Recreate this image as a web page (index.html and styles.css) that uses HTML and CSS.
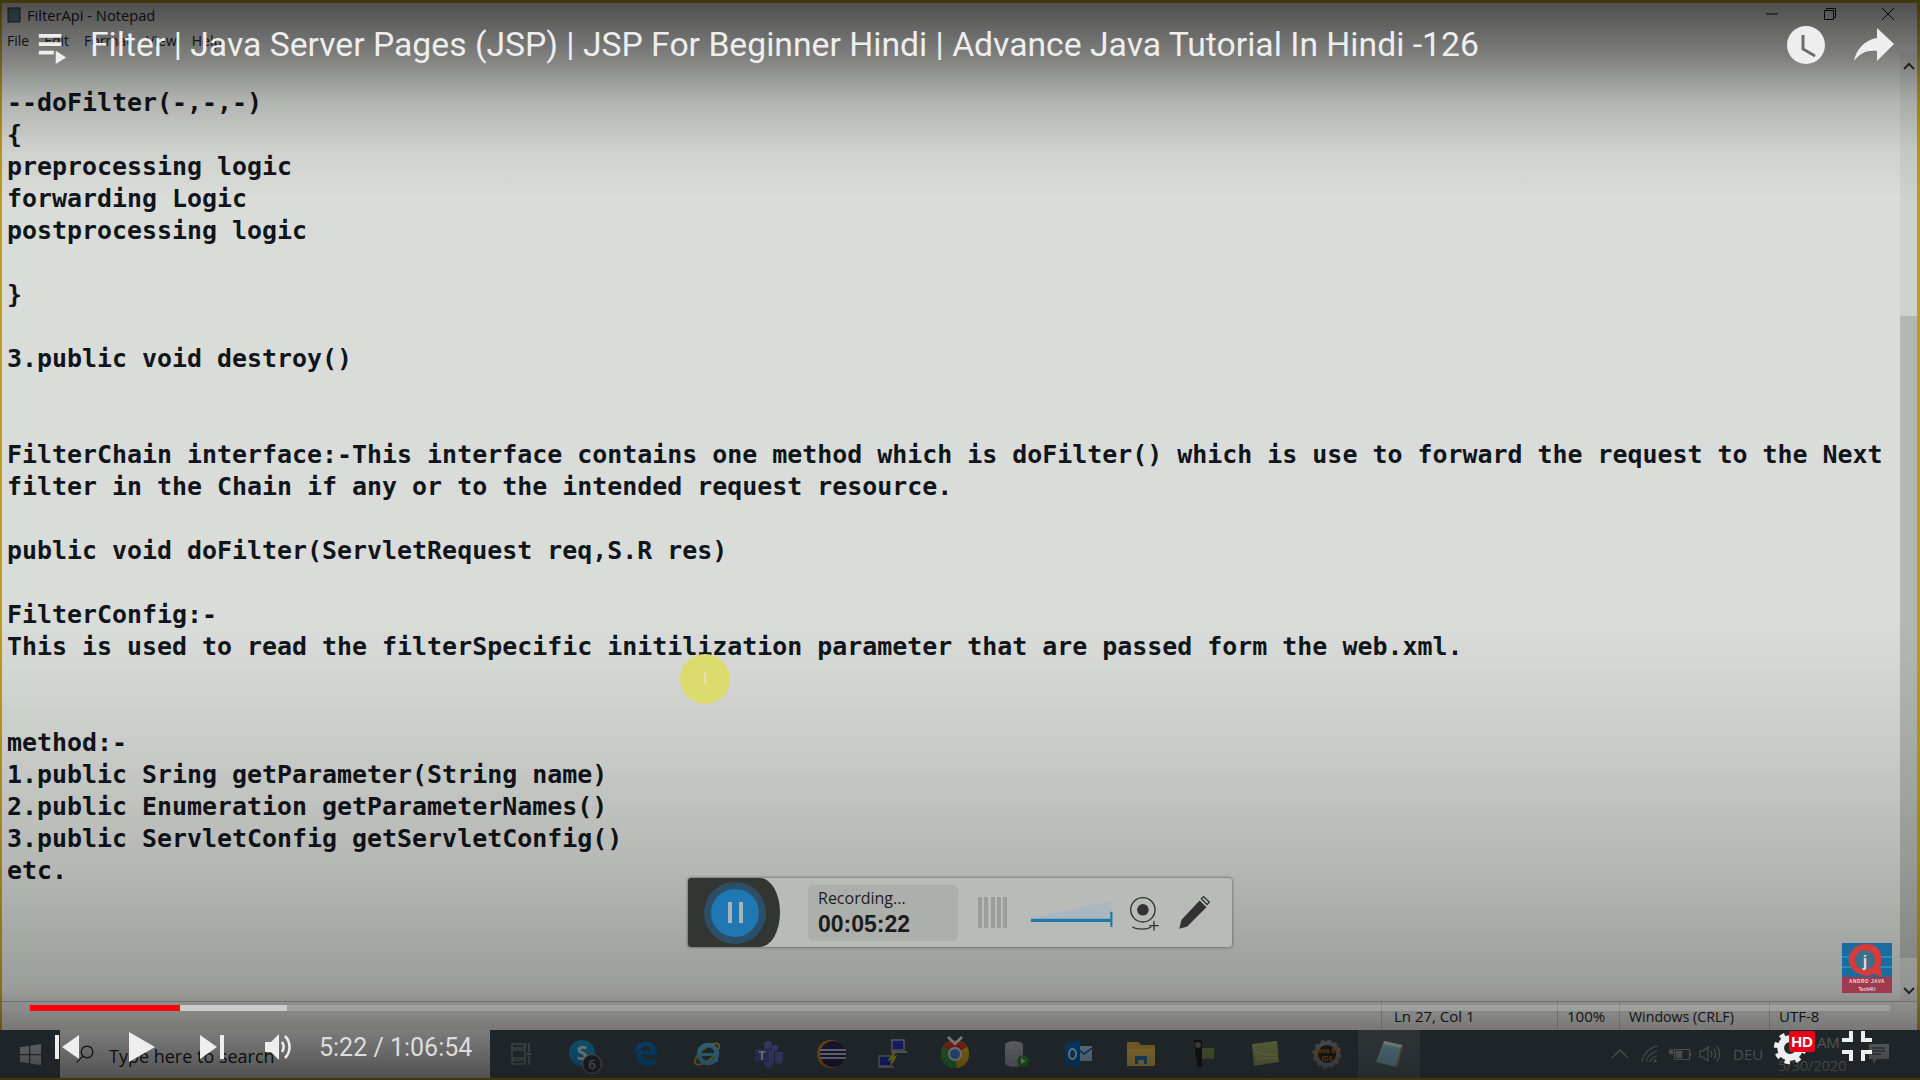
FILE: index.html
```html
<!DOCTYPE html>
<html lang="en">
<head>
  <meta charset="UTF-8" />
  <title>FilterApi - Notepad</title>
  <link rel="stylesheet" href="styles.css">
</head>
<body>

<div class="screen">

  <!-- notepad window -->
  <div class="window">
    <div class="titlebar">
      <svg class="app-icon" viewBox="0 0 14 16" width="14" height="16"><rect x="1" y="1" width="12" height="14" fill="#5f7f8c" stroke="#333"/></svg>
      <span class="app-name">FilterApi - Notepad</span>
      <span class="win-btns">
        <svg viewBox="0 0 14 14" width="14" height="14"><path d="M1 7h12" stroke="#111" stroke-width="1"/></svg>
        <svg viewBox="0 0 14 14" width="14" height="14"><path d="M1.500 3.500h9v9h-9z M3.500 3.500v-2h9v9h-2" fill="none" stroke="#111" stroke-width="1"/></svg>
        <svg viewBox="0 0 14 14" width="14" height="14"><path d="M1 1l12 12M13 1L1 13" stroke="#111" stroke-width="1"/></svg>
      </span>
    </div>
    <div class="menubar">
      <span>File</span><span>Edit</span><span>Format</span><span>View</span><span>Help</span>
    </div>
    <div class="editor">
<pre class="doc">--doFilter(-,-,-)
{
preprocessing logic
forwarding Logic
postprocessing logic

}

3.public void destroy()


FilterChain interface:-This interface contains one method which is doFilter() which is use to forward the request to the Next
filter in the Chain if any or to the intended request resource.

public void doFilter(ServletRequest req,S.R res)

FilterConfig:-
This is used to read the filterSpecific initilization parameter that are passed form the web.xml.


method:-
1.public Sring getParameter(String name)
2.public Enumeration getParameterNames()
3.public ServletConfig getServletConfig()
etc.</pre>
      <div class="scrollbar">
        <svg viewBox="0 0 12 8" width="12" height="8"><path d="M1 7l5-5 5 5" fill="none" stroke="#333" stroke-width="2"/></svg>
        <div class="thumb"></div>
        <svg viewBox="0 0 12 8" width="12" height="8"><path d="M1 1l5 5 5-5" fill="none" stroke="#333" stroke-width="2"/></svg>
      </div>
    </div>
    <div class="statusbar">
      <span class="cell cell-pos">Ln 27, Col 1</span>
      <span class="cell cell-zoom">100%</span>
      <span class="cell cell-eol">Windows (CRLF)</span>
      <span class="cell cell-enc">UTF-8</span>
    </div>
  </div>

  <!-- windows taskbar -->
  <div class="taskbar">
    <div class="start">
      <svg viewBox="0 0 20 20" width="21" height="21"><path d="M0 3l8.500-1.200v7.700H0zM9.800 1.600L20 0v9.500H9.800zM0 10.700h8.500v7.600L0 17.100zM9.800 10.700H20V20L9.800 18.500z" fill="#b9bfc2"/></svg>
    </div>
    <div class="search">
      <svg viewBox="0 0 24 24" width="20" height="20"><circle cx="14.500" cy="9.500" r="7" fill="none" stroke="#222" stroke-width="1.500"/><path d="M9.500 14.500L2 22" stroke="#222" stroke-width="1.500"/></svg>
      <span>Type here to search</span>
    </div>
    <div class="apps">
      <span class="app"><svg viewBox="0 0 24 24" width="24" height="24"><path d="M3 2h13v4H3zM3 8h13v8H3zM3 18h13v4H3zM20 1v9M20 14v9" fill="none" stroke="#9aa2a5" stroke-width="1.200"/><path d="M18 11h4v2h-4z" fill="#9aa2a5"/></svg></span>
      <span class="app app-badged"><svg viewBox="0 0 30 30" width="30" height="30"><circle cx="14" cy="14" r="13" fill="#1d9ad6"/><text x="14" y="21" class="glyph" font-size="20">S</text></svg><span class="badge">6</span></span>
      <span class="app"><svg viewBox="0 0 28 28" width="28" height="28"><path d="M2 15C3 6 9 2 15 2c7 0 11 5 11 13H10c0 5 9 7 15 3v6c-9 4-18 1-19-6-1-4 1-7 3-8-3 1-5 3-7 5zM10 11h10c0-3-2-5-5-5s-5 2-5 5z" fill="#0a7ad0"/></svg></span>
      <span class="app"><svg viewBox="0 0 30 30" width="30" height="30"><ellipse cx="15" cy="15" rx="15" ry="6" transform="rotate(-40 15 15)" fill="none" stroke="#e5b81f" stroke-width="1.800"/><circle cx="16" cy="15" r="9" fill="none" stroke="#5fc3e8" stroke-width="4.500"/><path d="M9 14h15v3H9z" fill="#5fc3e8"/><path d="M18 20h8v3h-8z" fill="#5fc3e8"/></svg></span>
      <span class="app"><svg viewBox="0 0 30 30" width="30" height="30"><circle cx="21" cy="9" r="3" fill="#6a70c4"/><circle cx="14" cy="6" r="4" fill="#6a70c4"/><path d="M10 11h10v11c0 5-3 7-5 7s-5-2-5-7z" fill="#6a70c4"/><path d="M21 13h8v8c0 3-2 4-4 4s-4-1-4-4z" fill="#6a70c4"/><rect x="1" y="10" width="14" height="13" fill="#555ca8"/><text x="8" y="21" class="glyph" font-size="12">T</text></svg></span>
      <span class="app"><svg viewBox="0 0 30 30" width="30" height="30"><circle cx="15" cy="15" r="14" fill="#d98a1d"/><circle cx="17" cy="15" r="13" fill="#2c2a5c"/><path d="M4 11h26M4 15h26M4 19h26" stroke="#cfd0e0" stroke-width="2"/></svg></span>
      <span class="app"><svg viewBox="0 0 30 30" width="30" height="30"><path d="M14 1h12v10H14zM1 17h12v10H1z" fill="#2438c4" stroke="#aaa" stroke-width="1.500"/><path d="M18 12L12 20l5-2-3 6" fill="none" stroke="#e5d21c" stroke-width="2"/><path d="M13 12h16v2H13zM0 27h16v2H0z" fill="#aaa"/></svg></span>
      <span class="app app-chrome"><svg viewBox="0 0 28 28" width="28" height="28"><circle cx="14" cy="14" r="14" fill="#e5b81f"/><path d="M14 14L2 7A14 14 0 0 1 26 7z" fill="#d9382c"/><path d="M14 14L26 7a14 14 0 0 1-10 21z" fill="#e5b81f"/><path d="M14 14L16 28A14 14 0 0 1 2 7z" fill="#3da14a"/><circle cx="14" cy="14" r="6" fill="#4a8be8" stroke="#e8e8e8" stroke-width="2"/></svg><svg class="chrome-check" viewBox="0 0 16 10" width="16" height="10"><path d="M1 1l7 7 7-7" fill="none" stroke="#eee" stroke-width="2.500"/></svg></span>
      <span class="app"><svg viewBox="0 0 26 28" width="26" height="28"><path d="M1 5c0-5 18-5 18 0v18c0 5-18 5-18 0z" fill="#aeb6bd"/><circle cx="19" cy="21" r="6" fill="#3c9c3c"/><path d="M17 18l5 3-5 3z" fill="#d8e8d8"/></svg></span>
      <span class="app"><svg viewBox="0 0 28 28" width="28" height="28"><rect x="12" y="6" width="15" height="15" fill="#a9d3f2"/><path d="M12 8l7 6 8-6" fill="none" stroke="#0a5ca8" stroke-width="1.500"/><path d="M0 4l15-4v28L0 24z" fill="#0a6cc0"/><ellipse cx="7.500" cy="14" rx="3.500" ry="5" fill="none" stroke="#e8f2fa" stroke-width="2"/></svg></span>
      <span class="app"><svg viewBox="0 0 30 26" width="30" height="26"><path d="M1 1h11l3 3h14v21H1z" fill="#e2b33e"/><path d="M1 8h28v17H1z" fill="#f3cd63"/><path d="M9 23v-8h12v8h-3v-4h-6v4z" fill="#2a7fc4"/></svg></span>
      <span class="app"><svg viewBox="0 0 26 30" width="26" height="30"><path d="M4 1h8v27H8C6 20 5 10 4 1z" fill="#222"/><circle cx="8" cy="6" r="3" fill="#777"/><rect x="12" y="9" width="12" height="11" fill="#84925a"/></svg></span>
      <span class="app"><svg viewBox="0 0 28 28" width="28" height="28"><path d="M1 4L26 1l2 21-25 4z" fill="#a7b268"/><path d="M4 12c8 1 14 4 22 3M6 20c6-3 12-2 20-1" stroke="#cdd5a0" fill="none"/></svg></span>
      <span class="app"><svg viewBox="0 0 30 30" width="30" height="30"><circle cx="15" cy="15" r="11" fill="#2a2a2a" stroke="#8a8d8f" stroke-width="4"/><circle cx="15" cy="15" r="13" fill="none" stroke="#8a8d8f" stroke-width="3" stroke-dasharray="3.500 3.300"/><text x="15" y="14" class="glyph glyph-orange" font-size="7">Java EE</text><text x="15" y="22" class="glyph glyph-orange" font-size="7">IDE</text></svg></span>
      <span class="app app-active"><svg viewBox="0 0 28 28" width="28" height="28"><path d="M9 1l18 4-6 22-20-5z" fill="#8fc7da"/><path d="M9 1l18 4-.8 3-18-4z" fill="#dfe8ec"/><path d="M21 27l6-22 1 1-5 21z" fill="#a58a5c"/></svg></span>
    </div>
    <div class="tray">
      <svg class="tray-chevron" viewBox="0 0 18 10" width="18" height="10"><path d="M1 9l8-8 8 8" fill="none" stroke="#a4aaad" stroke-width="1.300"/></svg>
      <svg class="tray-wifi" viewBox="0 0 20 20" width="20" height="20"><path d="M2 18C3 10 10 3 18 2M6 18c1-5 5-9 11-11M10 18c1-3 3-5 7-6" fill="none" stroke="#a4aaad" stroke-width="1.200"/><circle cx="15" cy="17" r="1.500" fill="#a4aaad"/></svg>
      <svg class="tray-batt" viewBox="0 0 22 14" width="22" height="14"><path d="M5.500 2.500h15v10h-15z" fill="none" stroke="#a4aaad" stroke-width="1.200"/><path d="M7 4h6v7H7zM21 6h1v3h-1zM0 3h4v4H0zM1 0v3M3 0v3" fill="#a4aaad" stroke="#a4aaad" stroke-width=".4"/></svg>
      <svg class="tray-vol" viewBox="0 0 22 18" width="22" height="18"><path d="M1 6h3l5-4v14l-5-4H1z" fill="none" stroke="#a4aaad" stroke-width="1.200"/><path d="M12 6c1 2 1 4 0 6M15 4c2 3 2 7 0 10M18 1c3 5 3 11 0 16" fill="none" stroke="#a4aaad" stroke-width="1.200"/></svg>
      <span class="lang">DEU</span>
      <span class="clock"><span class="clock-time">AM</span><span class="clock-date">5/30/2020</span></span>
      <svg class="notify" viewBox="0 0 20 20" width="20" height="20"><path d="M0 0h20v15H8l-4 5v-5H0z" fill="#a4aaad"/><path d="M3 4h13M3 7h13M3 10h9" stroke="#33393c" stroke-width="1.200"/></svg>
    </div>
  </div>

  <!-- video shading, sits over the recording -->
  <div class="shade shade-top"></div>
  <div class="shade shade-bottom"></div>

  <!-- mouse highlight from the screen recorder -->
  <div class="cursor-spot"><span class="ibeam">I</span></div>

  <!-- screen recorder widget -->
  <div class="recorder">
    <div class="rec-left">
      <div class="rec-ring"><div class="rec-btn"><i></i><i></i></div></div>
    </div>
    <div class="rec-time">
      <span class="rec-label">Recording...</span>
      <span class="rec-clock">00:05:22</span>
    </div>
    <div class="rec-bars"><i></i><i></i><i></i><i></i><i></i></div>
    <svg class="rec-level" viewBox="0 0 76 24" width="82" height="26"><path d="M0 16L74 0v16z" fill="#a9b8c0"/><path d="M0 18h74" stroke="#1f78a8" stroke-width="3"/><path d="M74.500 10v14" stroke="#1f78a8" stroke-width="2"/></svg>
    <svg class="rec-cam" viewBox="0 0 30 34" width="32" height="36"><circle cx="13" cy="13" r="11.500" fill="none" stroke="#333" stroke-width="1.300"/><circle cx="13" cy="13" r="5.500" fill="#333"/><path d="M3 29c4 3 14 3 18 0" fill="none" stroke="#333" stroke-width="1.300"/><path d="M19 28h9M23.500 23.500v9" stroke="#333" stroke-width="1.300"/></svg>
    <svg class="rec-pen" viewBox="0 0 28 30" width="32" height="34"><path d="M1 29l2-8L19 4l6 6L8 27z" fill="#333"/><path d="M20.500 2.500l2-2 5 5-2 2z" fill="none" stroke="#333" stroke-width="1.200"/></svg>
  </div>

  <!-- channel watermark -->
  <svg class="watermark" viewBox="0 0 50 50" width="50" height="50">
    <rect width="50" height="50" fill="#1b6c9e"/>
    <path d="M0 14h50M0 24h50" stroke="#35b6d8" stroke-width="1.500" opacity=".6"/>
    <path d="M25 1c11 0 16 9 14 18-1 5-1 10 2 15l-9-3c-3 2-8 2-12 1C10 29 4 20 8 11 11 4 18 1 25 1z" fill="#d93a3a"/>
    <circle cx="23" cy="17" r="10" fill="#3c6f88"/>
    <text x="23" y="24" class="wm-text" font-size="16">j</text>
    <rect y="34" width="50" height="16" fill="#b53040" opacity=".85"/>
    <text x="25" y="40" class="wm-text wm-wide" font-size="4.800">ANDRO JAVA</text>
    <text x="25" y="47.500" class="wm-text" font-size="4.800">Tech4U</text>
  </svg>

  <!-- youtube player chrome -->
  <div class="yt-top">
    <svg class="yt-playlist" viewBox="0 0 30 34" width="34" height="32"><path d="M1 2h24v4H1zM1 11h24v4H1zM1 20h16v4H1z" fill="#eee"/><path d="M19 20l11 7-11 7z" fill="#eee"/></svg>
    <span class="yt-title">Filter | Java Server Pages (JSP) | JSP For Beginner Hindi | Advance Java Tutorial In Hindi -126</span>
    <svg class="yt-clock" viewBox="0 0 38 38" width="38" height="38"><circle cx="19" cy="19" r="19" fill="#eee"/><path d="M16 9v14l12 7" fill="none" stroke="#6a6c6a" stroke-width="3"/></svg>
    <svg class="yt-share" viewBox="0 0 40 34" width="40" height="34"><path d="M23 0l17 16-17 17V23C13 22 6 25 0 33c2-11 10-21 23-23z" fill="#eee"/></svg>
  </div>

  <div class="yt-bottom">
    <div class="progress"><div class="loaded"></div><div class="played"></div></div>
    <div class="yt-controls">
      <svg class="yt-prev" viewBox="0 0 24 24" width="24" height="24"><path d="M0 0h4v24H0zM24 0v24L7 12z" fill="#eee"/></svg>
      <svg class="yt-play" viewBox="0 0 26 30" width="26" height="30"><path d="M0 0l26 15L0 30z" fill="#eee"/></svg>
      <svg class="yt-next" viewBox="0 0 24 24" width="24" height="24"><path d="M24 0h-4v24h4zM0 0v24l17-12z" fill="#eee"/></svg>
      <svg class="yt-vol" viewBox="0 0 28 28" width="28" height="28"><path d="M0 9h6l8-8v26l-8-8H0z" fill="#eee"/><path d="M17 9c2 3 2 7 0 10" fill="none" stroke="#eee" stroke-width="2.500"/><path d="M20 3c6 6 6 16 0 22" fill="none" stroke="#eee" stroke-width="2.500"/></svg>
      <span class="yt-time">5:22 / 1:06:54</span>
    </div>
  </div>

  <div class="yt-corner">
    <svg class="yt-gear" viewBox="0 0 40 40" width="34" height="34"><circle cx="20" cy="20" r="11" fill="none" stroke="#eee" stroke-width="8"/><circle cx="20" cy="20" r="16" fill="none" stroke="#eee" stroke-width="6" stroke-dasharray="6 6.560"/></svg>
    <span class="hd">HD</span>
    <svg class="yt-exitfs" viewBox="0 0 30 30" width="30" height="30"><path d="M11 0v11H0v-4h7V0zM19 0v11h11v-4h-7V0zM11 30V19H0v4h7v7zM19 30V19h11v4h-7v7z" fill="#eee"/></svg>
  </div>

</div>

</body>
</html>
```

FILE: styles.css
```css
* {
  box-sizing: border-box;
}

html, body {
  margin: 0;
  padding: 0;
}

body {
  background: #000;
  font-family: "Open Sans", "Noto Sans", sans-serif;
  overflow: hidden;
}

.screen {
  position: relative;
  width: 1920px;
  height: 1080px;
  display: flex;
  flex-direction: column;
  background: #b5a021;
  padding: 3px 3px 2px 2px;
  overflow: hidden;
}

/* notepad */
.window {
  flex: 1;
  display: flex;
  flex-direction: column;
  background: #dadcd9;
  min-height: 0;
}

.titlebar {
  height: 24px;
  display: flex;
  align-items: center;
  padding-left: 5px;
  font-size: 14px;
  color: #222;
}

.app-name {
  margin-left: 6px;
  font-size: 14.700px;
}

.win-btns {
  margin-left: auto;
  display: flex;
  gap: 44px;
  padding-right: 21px;
  margin-right: 1px;
  margin-top: -2px;
}

.menubar {
  height: 26px;
  display: flex;
  align-items: center;
  padding-left: 5px;
  font-size: 14px;
  color: #222;
  gap: 15px;
}

.editor {
  flex: 1;
  display: flex;
  min-height: 0;
}

.doc {
  flex: 1;
  margin: 0;
  padding: 34px 0 0 5px;
  font-family: "DejaVu Sans Mono", "Liberation Mono", monospace;
  font-weight: bold;
  font-size: 24.930px;
  line-height: 32px;
  letter-spacing: 0;
  color: #10151a;
  overflow: hidden;
}

.scrollbar {
  width: 17px;
  display: flex;
  flex-direction: column;
  align-items: center;
  background: #cfd1ce;
  padding: 9px 0 6px;
}

.thumb {
  width: 17px;
  height: 642px;
  margin-top: 246px;
  margin-bottom: auto;
  background: #b5b7b4;
}

.statusbar {
  height: 29px;
  display: flex;
  align-items: center;
  border-top: 1px solid #a8aaa7;
  font-size: 15px;
  color: #222;
  padding-left: 1379px;
}

.cell {
  height: 100%;
  display: flex;
  align-items: center;
  border-left: 1px solid #b4b6b3;
  padding-left: 9px;
}

.cell-pos {
  width: 176px;
  padding-left: 12px;
}

.cell-zoom {
  width: 62px;
}

.cell-eol {
  width: 150px;
  font-size: 14.200px;
}

/* taskbar */
.taskbar {
  height: 48px;
  display: flex;
  align-items: stretch;
  background: linear-gradient(to bottom, #374349, #50606a);
  margin: 0 -3px 0 -2px;
}

.start {
  flex: none;
  width: 60px;
  display: flex;
  align-items: center;
  justify-content: center;
}

.search {
  flex: none;
  width: 430px;
  display: flex;
  align-items: center;
  background: #e2e3e2;
  color: #222;
  font-size: 18px;
  padding-left: 15px;
  gap: 14px;
}

.search svg {
  flex: none;
}

.search span {
  margin-top: 3px;
}

.apps {
  flex: none;
  display: flex;
  align-items: stretch;
}

.app {
  position: relative;
  flex: none;
  width: 62px;
  display: flex;
  align-items: center;
  justify-content: center;
}

.app-active {
  background: rgba(255, 255, 255, 0.14);
}

.chrome-check {
  position: absolute;
  left: 23px;
  top: 6px;
}

.badge {
  position: absolute;
  left: 30px;
  top: 24px;
  width: 20px;
  height: 20px;
  border-radius: 50%;
  border: 1px solid #aab0b3;
  background: #374349;
  color: #c5c9cb;
  font-size: 13px;
  line-height: 18px;
  text-align: center;
}

.glyph {
  font-family: "Open Sans", sans-serif;
  font-weight: bold;
  text-anchor: middle;
  fill: #e8eef2;
}

.glyph-orange {
  fill: #c9731e;
}

.tray {
  flex: 1;
  display: flex;
  align-items: center;
  color: #a4aaad;
  padding-left: 191px;
}

.tray svg {
  flex: none;
}

.tray-chevron {
  margin-right: 11px;
}

.tray-wifi {
  margin-right: 9px;
}

.tray-batt {
  margin-right: 8px;
}

.tray-vol {
  margin-right: 12px;
}

.lang {
  font-size: 15px;
  width: 45px;
}

.clock {
  width: 68px;
  margin-right: 23px;
  display: flex;
  flex-direction: column;
  font-size: 15px;
  line-height: 23px;
  letter-spacing: -.3px;
  white-space: nowrap;
}

.clock-time {
  padding-left: 39px;
}

/* video shading */
.shade {
  position: absolute;
  left: 0;
  width: 1920px;
  pointer-events: none;
}

.shade-top {
  top: 0;
  height: 200px;
  background: linear-gradient(to bottom, rgba(0,0,0,0.65) 0, rgba(0,0,0,0.43) 27%, rgba(0,0,0,0.19) 50%, rgba(0,0,0,0.05) 75%, rgba(0,0,0,0) 100%);
}

.shade-bottom {
  top: 620px;
  height: 460px;
  background: linear-gradient(to bottom, rgba(0,0,0,0) 0, rgba(0,0,0,0.07) 26%, rgba(0,0,0,0.17) 54%, rgba(0,0,0,0.29) 80%, rgba(0,0,0,0.45) 89%, rgba(0,0,0,0.65) 100%);
}

/* cursor */
.cursor-spot {
  position: absolute;
  left: 680px;
  top: 654px;
  width: 50px;
  height: 50px;
  border-radius: 50%;
  background: #dcdc6e;
  display: flex;
  align-items: center;
  justify-content: center;
}

.ibeam {
  font-family: "Liberation Serif", serif;
  font-size: 16px;
  color: #e6e6b8;
}

/* recorder */
.recorder {
  position: absolute;
  left: 688px;
  top: 878px;
  width: 544px;
  height: 69px;
  display: flex;
  align-items: center;
  background: #b9bbb8;
  border-radius: 3px;
  box-shadow: 0 0 3px rgba(0,0,0,0.6);
  overflow: hidden;
}

.rec-left {
  flex: none;
  width: 92px;
  height: 100%;
  display: flex;
  align-items: center;
  padding-left: 16px;
  background: #333533;
  border-radius: 0 20px 20px 0 / 0 50% 50% 0;
}

.rec-ring {
  width: 62px;
  height: 62px;
  border-radius: 50%;
  background: #2c4f67;
  display: flex;
  align-items: center;
  justify-content: center;
}

.rec-btn {
  width: 48px;
  height: 48px;
  border-radius: 50%;
  background: #1f78b4;
  display: flex;
  align-items: center;
  justify-content: center;
  gap: 7px;
}

.rec-btn i {
  width: 4px;
  height: 21px;
  background: #aab4b8;
}

.rec-time {
  flex: none;
  margin-left: 28px;
  width: 150px;
  height: 56px;
  display: flex;
  flex-direction: column;
  justify-content: center;
  padding-left: 10px;
  background: #adafac;
  border-radius: 5px;
  color: #1c1c1c;
}

.rec-label {
  font-size: 16px;
  line-height: 23px;
  font-family: "Open Sans", sans-serif;
}

.rec-clock {
  font-family: "Liberation Sans", sans-serif;
  font-weight: bold;
  font-size: 23px;
  line-height: 28px;
}

.rec-bars {
  flex: none;
  margin-left: 20px;
  display: flex;
  gap: 2.250px;
  height: 31px;
}

.rec-bars i {
  width: 4px;
  background: #9b9d9b;
}

.rec-level {
  flex: none;
  margin-left: 24px;
  margin-top: 2px;
}

.rec-cam {
  flex: none;
  margin-left: 16px;
  margin-top: 3px;
}

.rec-pen {
  flex: none;
  margin-left: 17px;
}

/* watermark */
.watermark {
  position: absolute;
  left: 1842px;
  top: 943px;
}

.wm-text {
  font-family: "Liberation Sans", sans-serif;
  font-weight: bold;
  text-anchor: middle;
  fill: #e8d8d8;
}

.wm-wide {
  letter-spacing: .5px;
}

/* youtube chrome */
.yt-top {
  position: absolute;
  left: 35px;
  top: 26px;
  width: 1859px;
  display: flex;
  align-items: center;
}

.yt-top svg {
  flex: none;
}

.yt-playlist {
  margin-top: 6px;
}

.yt-title {
  margin-left: 21px;
  font-family: Roboto, sans-serif;
  font-size: 33.700px;
  line-height: 38px;
  color: #eee;
  white-space: nowrap;
}

.yt-clock {
  margin-left: auto;
  margin-right: 29px;
}

.yt-bottom {
  position: absolute;
  left: 30px;
  top: 1005px;
  width: 1860px;
}

.progress {
  position: relative;
  height: 6px;
  background: rgba(255, 255, 255, 0.18);
}

.loaded {
  position: absolute;
  left: 0;
  top: 0;
  height: 6px;
  width: 257px;
  background: #ccc;
}

.played {
  position: absolute;
  left: 0;
  top: 0;
  height: 6px;
  width: 150px;
  background: #f00;
}

.yt-controls {
  display: flex;
  align-items: center;
  height: 42px;
  margin-top: 15px;
  padding-left: 25px;
}

.yt-play {
  margin-left: 50px;
}

.yt-next {
  margin-left: 45px;
}

.yt-vol {
  margin-left: 41px;
}

.yt-time {
  margin-left: 26px;
  font-family: Roboto, sans-serif;
  font-size: 25px;
  color: #ddd;
  white-space: nowrap;
}

.yt-corner {
  position: absolute;
  left: 1768px;
  top: 1028px;
  width: 110px;
  height: 40px;
}

.yt-gear {
  position: absolute;
  left: 5px;
  top: 3px;
}

.hd {
  position: absolute;
  left: 21px;
  top: 3px;
  width: 26px;
  height: 21px;
  background: #e8001a;
  border-radius: 2px;
  color: #fff;
  font-family: "Liberation Sans", sans-serif;
  font-weight: bold;
  font-size: 15px;
  line-height: 21px;
  text-align: center;
}

.yt-exitfs {
  position: absolute;
  left: 74px;
  top: 3px;
}
```
